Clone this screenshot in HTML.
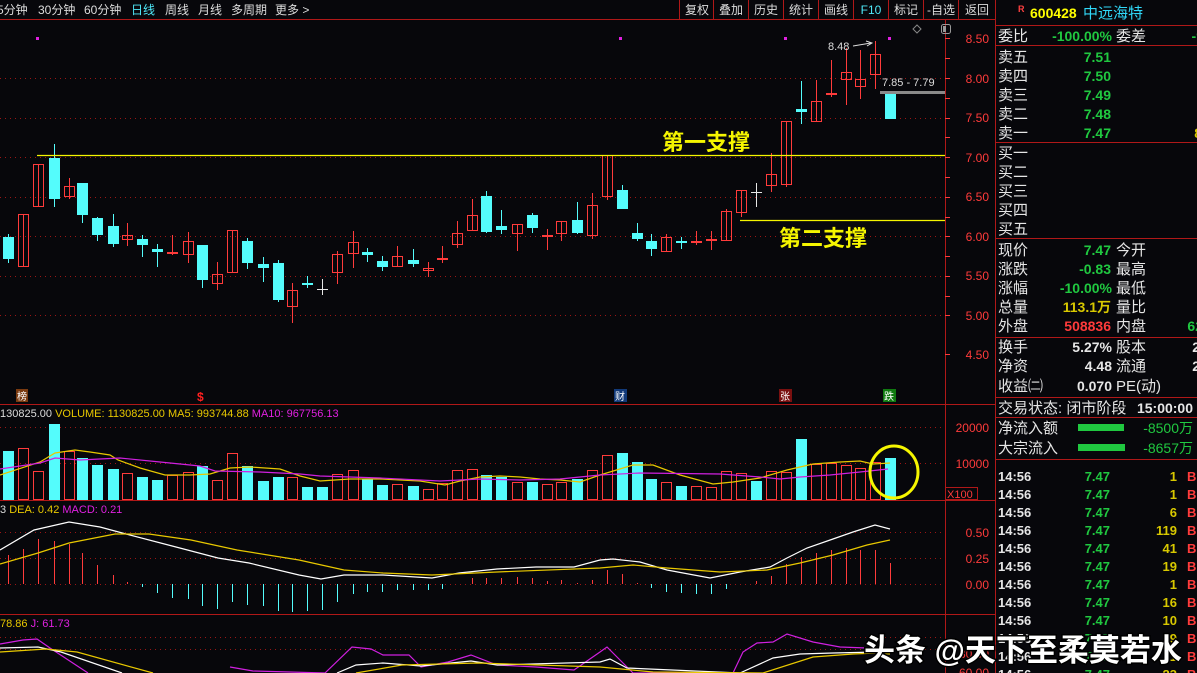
<!DOCTYPE html>
<html><head><meta charset="utf-8"><style>
html,body{margin:0;padding:0;background:#07070b;width:1197px;height:673px;overflow:hidden;font-family:"Liberation Sans","Noto Sans CJK SC",sans-serif}
svg{position:absolute;left:0;top:0}
text{font-family:"Liberation Sans","Noto Sans CJK SC",sans-serif}
</style></head><body>
<svg id="s" width="1197" height="673" viewBox="0 0 1197 673">
<rect width="1197" height="673" fill="#07070b"/>
<!-- header -->
<g font-size="12" fill="#dcdcdc">
<text x="-3" y="14">5分钟</text><text x="38" y="14">30分钟</text><text x="84" y="14">60分钟</text>
<text x="131" y="14" fill="#4fe8f8">日线</text><text x="165" y="14">周线</text><text x="198" y="14">月线</text>
<text x="231" y="14">多周期</text><text x="275" y="14">更多 &gt;</text>
</g>
<g font-size="12" fill="#dcdcdc" text-anchor="middle">
<text x="697" y="14">复权</text><text x="731" y="14">叠加</text><text x="766" y="14">历史</text><text x="801" y="14">统计</text>
<text x="836" y="14">画线</text><text x="871" y="14" fill="#4fe8f8">F10</text><text x="906" y="14">标记</text>
<text x="941" y="14">-自选</text><text x="977" y="14">返回</text>
</g>
<g stroke="#b01818" stroke-width="1">
<line x1="0" y1="19.5" x2="996" y2="19.5"/>
<line x1="679.5" y1="0" x2="679.5" y2="19"/><line x1="713.5" y1="0" x2="713.5" y2="19"/><line x1="748.5" y1="0" x2="748.5" y2="19"/>
<line x1="783.5" y1="0" x2="783.5" y2="19"/><line x1="818.5" y1="0" x2="818.5" y2="19"/><line x1="853.5" y1="0" x2="853.5" y2="19"/>
<line x1="888.5" y1="0" x2="888.5" y2="19"/><line x1="923.5" y1="0" x2="923.5" y2="19"/><line x1="958.5" y1="0" x2="958.5" y2="19"/>
<line x1="945.5" y1="19" x2="945.5" y2="673"/>
<line x1="995.5" y1="0" x2="995.5" y2="673"/>
<line x1="0" y1="404.5" x2="996" y2="404.5"/>
<line x1="0" y1="500.5" x2="996" y2="500.5"/>
<line x1="0" y1="614.5" x2="996" y2="614.5"/>
</g>
<!-- grid -->
<g stroke="#9a1515" stroke-width="1" stroke-dasharray="1,4">
<line x1="0" y1="78.5" x2="945" y2="78.5"/><line x1="0" y1="118.5" x2="945" y2="118.5"/><line x1="0" y1="157.5" x2="945" y2="157.5"/>
<line x1="0" y1="197.5" x2="945" y2="197.5"/><line x1="0" y1="236.5" x2="945" y2="236.5"/><line x1="0" y1="276.5" x2="945" y2="276.5"/>
<line x1="0" y1="315.5" x2="945" y2="315.5"/>
<line x1="0" y1="427.5" x2="945" y2="427.5"/><line x1="0" y1="463.5" x2="945" y2="463.5"/>
<line x1="0" y1="532.5" x2="945" y2="532.5"/><line x1="0" y1="558.5" x2="945" y2="558.5"/><line x1="0" y1="584.5" x2="945" y2="584.5"/>
<line x1="0" y1="637.5" x2="945" y2="637.5"/><line x1="0" y1="649.5" x2="945" y2="649.5"/>
</g>
<!-- axis labels -->
<g font-size="12" fill="#ff3b3b" text-anchor="end">
<text x="989" y="43">8.50</text><text x="989" y="83">8.00</text><text x="989" y="122">7.50</text><text x="989" y="162">7.00</text>
<text x="989" y="201">6.50</text><text x="989" y="241">6.00</text><text x="989" y="280">5.50</text><text x="989" y="320">5.00</text><text x="989" y="359">4.50</text>
<text x="989" y="432">20000</text><text x="989" y="468">10000</text>
<text x="989" y="537">0.50</text><text x="989" y="563">0.25</text><text x="989" y="589">0.00</text>
<text x="989" y="658">80.00</text><text x="989" y="677">60.00</text>
</g>
<g stroke="#ff3b3b"><line x1="945" y1="38.5" x2="950" y2="38.5"/><line x1="945" y1="58.5" x2="950" y2="58.5"/><line x1="945" y1="78.5" x2="950" y2="78.5"/><line x1="945" y1="98.5" x2="950" y2="98.5"/><line x1="945" y1="118.5" x2="950" y2="118.5"/><line x1="945" y1="137.5" x2="950" y2="137.5"/><line x1="945" y1="157.5" x2="950" y2="157.5"/><line x1="945" y1="177.5" x2="950" y2="177.5"/><line x1="945" y1="197.5" x2="950" y2="197.5"/><line x1="945" y1="217.5" x2="950" y2="217.5"/><line x1="945" y1="236.5" x2="950" y2="236.5"/><line x1="945" y1="256.5" x2="950" y2="256.5"/><line x1="945" y1="276.5" x2="950" y2="276.5"/><line x1="945" y1="296.5" x2="950" y2="296.5"/><line x1="945" y1="315.5" x2="950" y2="315.5"/><line x1="945" y1="354.5" x2="950" y2="354.5"/></g>
<rect x="945.5" y="487.5" width="32" height="12" fill="none" stroke="#b01818"/>
<text x="947" y="498" font-size="11" fill="#ff3b3b">X100</text>
<rect x="941.5" y="24.5" width="9" height="9" rx="2" fill="none" stroke="#999"/><rect x="943" y="26" width="3" height="6" fill="#999"/>
<path d="M917 25 L921 29 L917 33 L913 29 Z" fill="none" stroke="#888"/>
<!-- markers -->
<g fill="#e020e0"><rect x="36" y="37" width="3" height="3"/><rect x="619" y="37" width="3" height="3"/><rect x="784" y="37" width="3" height="3"/><rect x="888" y="37" width="3" height="3"/></g>
<g id="cand"></g>
<!-- support lines -->
<line x1="37" y1="155.5" x2="945" y2="155.5" stroke="#f5f500" stroke-width="1.2"/>
<line x1="740" y1="220.5" x2="945" y2="220.5" stroke="#f5f500" stroke-width="1.2"/>
<rect x="880" y="91" width="65" height="3" fill="#8a8a8a"/>
<text x="662" y="150" font-size="22" fill="#f5f500" font-weight="bold">第一支撑</text>
<text x="779" y="246" font-size="22" fill="#f5f500" font-weight="bold">第二支撑</text>
<text x="828" y="50" font-size="11" fill="#dcdcdc">8.48</text>
<path d="M853 46 L871 43 M866 41 L872 43 L867 46" stroke="#dcdcdc" fill="none"/>
<text x="882" y="86" font-size="11" fill="#dcdcdc">7.85 - 7.79</text>
<!-- signal icons -->
<rect x="16" y="389" width="12" height="13" fill="#7a3a10"/><text x="17" y="400" font-size="10" fill="#fff">榜</text>
<text x="197" y="401" font-size="12" fill="#ff2020" font-weight="bold">$</text>
<rect x="614" y="389" width="13" height="13" fill="#123a7a"/><text x="615" y="400" font-size="10" fill="#fff">财</text>
<rect x="779" y="389" width="13" height="13" fill="#7a1010"/><text x="780" y="400" font-size="10" fill="#fff">张</text>
<rect x="883" y="389" width="13" height="13" fill="#107a10"/><text x="884" y="400" font-size="10" fill="#fff">跌</text>
<!-- panel titles -->
<text x="0" y="417" font-size="11"><tspan fill="#dcdcdc">130825.00 </tspan><tspan fill="#e8c800"> VOLUME: 1130825.00  MA5: 993744.88 </tspan><tspan fill="#e020e0"> MA10: 967756.13</tspan></text>
<text x="0" y="513" font-size="11"><tspan fill="#dcdcdc">3 </tspan><tspan fill="#e8c800"> DEA: 0.42 </tspan><tspan fill="#e020e0"> MACD: 0.21</tspan></text>
<text x="0" y="627" font-size="11"><tspan fill="#e8c800">78.86 </tspan><tspan fill="#e020e0"> J: 61.73</tspan></text>
<g id="vol"></g>
<g id="macd"></g>
<g fill="none" stroke-width="1.2">
<polyline stroke="#e8c800" points="0,475 40,462 55,453 75,450 90,452 110,455 118,460 140,468 165,475 190,475 210,474 230,468 250,467 280,469 300,476 320,481 350,479 380,479 420,481 445,485 460,481 480,477 500,476 520,477 540,479 560,480 580,482 600,475 633,465 653,465 680,475 713,484 733,482 760,478 787,470 813,464 840,462 860,461 873,464 890,463"/>
<polyline stroke="#d020e0" points="0,469 40,463 55,458 80,460 120,458 160,462 200,466 215,471 260,472 300,474 320,476 380,478 440,481 480,479 520,480 560,479 600,475 640,473 720,474 760,477 780,479 800,477 830,475 860,472 888,469"/>
<polyline stroke="#ffffff" points="0,550 34,530 69,522 100,527 126,534 176,547 218,558 249,563 299,575 321,579 344,575 383,575 432,578 459,573 497,569 536,567 574,567 600,560 613,559 640,562 667,570 710,578 740,572 770,567 787,558 807,548 833,539 853,532 875,525 890,529"/>
<polyline stroke="#e8c800" points="0,564 38,553 69,543 115,534 149,534 191,540 237,550 299,560 344,570 383,573 432,575 497,572 600,568 633,565 667,568 720,572 767,570 800,563 833,555 867,545 890,540"/>
<polyline stroke="#d020e0" points="0,644 23,640 37,639 50,648 88,673"/>
<polyline stroke="#ffffff" points="0,648 38,647 61,652 122,673"/>
<polyline stroke="#e8c800" points="0,652 46,649 77,652 153,673"/>
<polyline stroke="#d020e0" points="230,667 253,671 325,673 352,647 371,649 383,655 409,655 421,667 448,662 471,655 497,665 536,667 574,670 600,652 607,647 627,667 633,673 733,673 743,652 757,643 773,642 787,634 813,642 840,647 867,648 880,652 890,663"/>
<polyline stroke="#ffffff" points="337,673 356,665 383,663 421,666 471,661 497,665 600,662 610,659 627,668 740,673 773,658 800,654 833,653 877,652 890,658"/>
<polyline stroke="#e8c800" points="356,673 402,665 478,663 600,667 653,672 763,673 813,657 853,654 877,653 890,654"/>
</g>
<ellipse cx="894" cy="472" rx="24" ry="26" fill="none" stroke="#f5f500" stroke-width="3"/>
<!-- right panel -->
<g stroke="#b01818"><line x1="996" y1="25.5" x2="1197" y2="25.5"/><line x1="996" y1="45.5" x2="1197" y2="45.5"/><line x1="996" y1="142.5" x2="1197" y2="142.5"/><line x1="996" y1="238.5" x2="1197" y2="238.5"/><line x1="996" y1="337.5" x2="1197" y2="337.5"/><line x1="996" y1="397.5" x2="1197" y2="397.5"/><line x1="996" y1="417.5" x2="1197" y2="417.5"/><line x1="996" y1="459.5" x2="1197" y2="459.5"/></g>
<text x="1018" y="12" font-size="9" fill="#ff4040" font-weight="bold">R</text>
<text x="1030" y="18" font-size="14" fill="#ffff00" font-weight="bold">600428</text>
<text x="1083" y="18" font-size="15" fill="#30d8f8">中远海特</text>
<g font-size="15" fill="#e6e6e6">
<text x="998" y="41">委比</text><text x="1116" y="41">委差</text>
<text x="998" y="62">卖五</text><text x="998" y="81">卖四</text><text x="998" y="100">卖三</text><text x="998" y="119">卖二</text><text x="998" y="138">卖一</text>
<text x="998" y="158">买一</text><text x="998" y="177">买二</text><text x="998" y="196">买三</text><text x="998" y="215">买四</text><text x="998" y="234">买五</text>
<text x="998" y="255">现价</text><text x="1116" y="255">今开</text><text x="998" y="274">涨跌</text><text x="1116" y="274">最高</text>
<text x="998" y="293">涨幅</text><text x="1116" y="293">最低</text><text x="998" y="312">总量</text><text x="1116" y="312">量比</text>
<text x="998" y="331">外盘</text><text x="1116" y="331">内盘</text>
<text x="998" y="352">换手</text><text x="1116" y="352">股本</text><text x="998" y="371">净资</text><text x="1116" y="371">流通</text>
<text x="998" y="391">收益㈡</text><text x="1116" y="391">PE(动)</text>
<text x="998" y="413">交易状态: 闭市阶段</text>
<text x="998" y="433">净流入额</text><text x="998" y="453">大宗流入</text>
</g>
<g font-size="14" font-weight="bold" text-anchor="end">
<text x="1112" y="41" fill="#20c840">-100.00%</text><text x="1204" y="41" fill="#20c840">-9</text>
<text x="1111" y="62" fill="#20c840">7.51</text><text x="1111" y="81" fill="#20c840">7.50</text><text x="1111" y="100" fill="#20c840">7.49</text><text x="1111" y="119" fill="#20c840">7.48</text><text x="1111" y="138" fill="#20c840">7.47</text>
<text x="1202" y="138" fill="#d8c800">8</text>
<text x="1111" y="255" fill="#20c840">7.47</text><text x="1111" y="274" fill="#20c840">-0.83</text><text x="1112" y="293" fill="#20c840">-10.00%</text>
<text x="1111" y="312" fill="#d8c800">113.1万</text><text x="1111" y="331" fill="#ff3b3b">508836</text><text x="1203" y="331" fill="#20c840">62</text>
<text x="1112" y="352" fill="#e6e6e6">5.27%</text><text x="1200" y="352" fill="#e6e6e6">2</text>
<text x="1112" y="371" fill="#e6e6e6">4.48</text><text x="1200" y="371" fill="#e6e6e6">2</text>
<text x="1112" y="391" fill="#e6e6e6">0.070</text>
<text x="1193" y="413" fill="#e6e6e6">15:00:00</text>
<text x="1193" y="433" fill="#20c840" font-weight="normal">-8500万</text><text x="1193" y="453" fill="#20c840" font-weight="normal">-8657万</text>
</g>
<rect x="1078" y="424" width="46" height="7" fill="#20c840"/><rect x="1078" y="444" width="47" height="7" fill="#20c840"/>
<g id="ticks" font-size="13" font-weight="bold"></g>
<!-- watermark -->
<g font-size="31" font-weight="bold" fill="#ffffff" stroke="#000">
<text x="864" y="661" style="paint-order:stroke;stroke-width:3">头条 @天下至柔莫若水</text>
</g>
</svg>
<script>
var NS="http://www.w3.org/2000/svg";
function el(p,t,a){var e=document.createElementNS(NS,t);for(var k in a)e.setAttribute(k,a[k]);p.appendChild(e);return e;}
var C="#54fcfc",R="#ff3b3b",W="#e6e6e6";
var xs=[8.4,23.3,38.3,53.6,68.5,82.3,97.2,112.5,127.4,142.4,157.3,172.2,187.5,202.4,217.4,232.3,247.2,262.5,277.5,292.4,307.3,322.2,337.2,352.5,367.4,382.3,397.2,412.5,427.5,442.4,456.6,471.5,486.4,501.3,516.6,531.6,546.5,561.4,576.7,591.7,606.6,621.5,636.5,651.4,666.3,681.2,696.2,711.1,726,741,756,770.8,785.8,800.7,815.6,830.6,845.5,860.4,875.4,890.3];
var cd=[["c",237,259,234,263],["r",214,267,214,267],["r",164,207,164,207],["c",158,199,144,207],["r",186,197,178,199],["c",183,215,183,223],["c",218,235,217,241],["c",226,244,214,247],["r",235,240,223,246],["c",239,245,235,257],["c",249,252,244,267],["r",252,253,235,255],["r",241,255,232,263],["c",245,280,245,288],["r",274,284,262,290],["r",230,273,230,273],["c",241,263,238,269],["c",264,268,257,282],["c",263,300,260,302],["r",290,307,283,323],["c",283,285,276,288],["w",289,289,279,295],["r",254,273,251,284],["r",242,254,231,268],["c",252,255,248,262],["c",261,267,256,271],["r",256,267,246,267],["c",260,264,249,267],["r",268,271,262,277],["r",258,260,246,263],["r",233,245,221,248],["r",215,231,199,231],["c",196,232,191,233],["c",226,230,210,234],["r",224,234,224,251],["c",215,228,213,233],["r",235,236,229,250],["r",221,234,221,241],["c",220,233,202,234],["r",205,236,193,239],["r",155,197,155,200],["c",190,209,185,209],["c",233,239,223,241],["c",241,249,234,256],["r",237,252,234,252],["c",241,243,237,249],["r",241,243,231,245],["r",239,240,231,250],["r",211,241,209,241],["r",190,213,190,217],["w",192,192,183,207],["r",174,186,153,192],["r",121,185,121,187],["c",109,112,81,124],["r",101,122,80,122],["r",93,95,60,97],["r",72,80,48,105],["r",79,87,50,99],["r",54,75,41,89],["c",94,119,94,119]];
var g=document.getElementById("cand");
cd.forEach(function(d,i){var x=Math.round(xs[i]),col=d[0]=="c"?C:d[0]=="r"?R:W;
el(g,"line",{x1:x+.5,y1:d[3],x2:x+.5,y2:d[4],stroke:col});
var h=Math.max(1,d[2]-d[1]);
if(d[0]=="c")el(g,"rect",{x:x-5,y:d[1],width:11,height:h,fill:C});
else if(d[0]=="r")el(g,"rect",{x:x-4.5,y:d[1]+.5,width:10,height:Math.max(1,h-1),fill:"none",stroke:R});
else el(g,"line",{x1:x-5,y1:d[1]+.5,x2:x+6,y2:d[1]+.5,stroke:W});});
var vt=[451,448,471,424,451,458,465,469,473,477,480,475,472,466,480,453,466,481,477,477,487,487,474,470,479,485,484,486,489,483,470,469,475,477,482,482,484,482,479,470,455,453,462,479,482,486,486,487,471,473,481,471,472,439,464,463,465,468,462,458];
var gv=document.getElementById("vol");
vt.forEach(function(t,i){var x=Math.round(xs[i]),c=cd[i][0];
if(c!="r")el(gv,"rect",{x:x-5,y:t,width:11,height:500-t,fill:C});
else el(gv,"rect",{x:x-4.5,y:t+.5,width:10,height:499-t,fill:"none",stroke:R});});
var mv=[555,549,539,541,544,553,565,575,582,587,593,598,599,606,609,602,605,606,611,612,611,610,602,594,592,592,590,590,590,589,584,578,578,578,577,578,581,580,583,580,570,574,583,588,592,593,594,594,589,584,581,576,564,557,553,550,548,550,550,563];
var gm=document.getElementById("macd");
mv.forEach(function(v,i){var x=Math.round(xs[i])+.5;el(gm,"line",{x1:x,y1:584,x2:x,y2:v,stroke:v<=584?R:C});});
var tg=document.getElementById("ticks");
var vols=["1","1","6","119","41","19","1","16","10","79","1","23"];
vols.forEach(function(v,i){var y=481+i*18;
el(tg,"text",{x:998,y:y,fill:"#e6e6e6"}).textContent="14:56";
el(tg,"text",{x:1110,y:y,fill:"#20c840","text-anchor":"end"}).textContent="7.47";
el(tg,"text",{x:1177,y:y,fill:"#d8c800","text-anchor":"end"}).textContent=v;
el(tg,"text",{x:1187,y:y,fill:"#ff3b3b"}).textContent="B";});
</script>
</body></html>
